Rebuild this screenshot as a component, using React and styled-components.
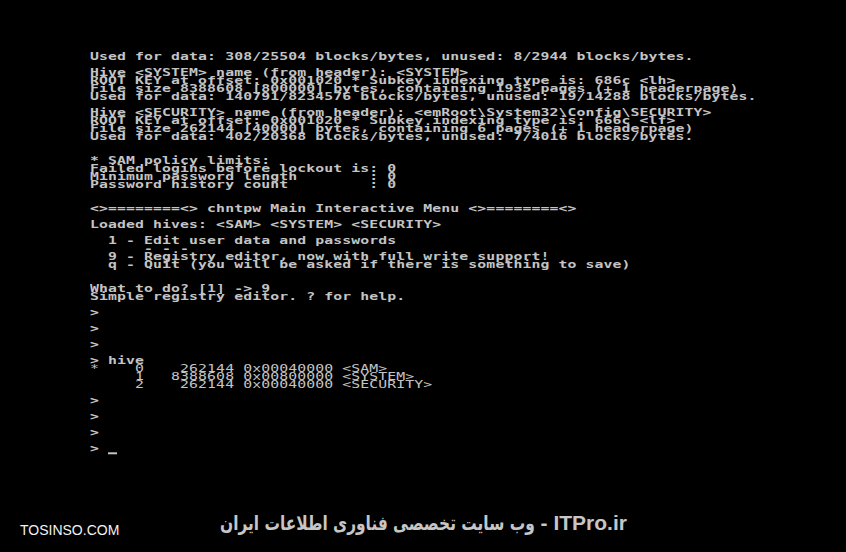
import React from 'react';
import styled, { createGlobalStyle } from 'styled-components';

const Global = createGlobalStyle`
  html, body { margin: 0; padding: 0; background: #000; }
  body { width: 846px; height: 552px; overflow: hidden; }
`;

const Screen = styled.div`
  width: 846px;
  height: 552px;
  background: #000;
  display: flex;
  flex-direction: column;
`;

const Terminal = styled.div`
  padding: 53px 0 0 90px;
  display: flex;
  flex-direction: column;
  font-family: "DejaVu Sans Mono", "Liberation Mono", monospace;
  font-size: 14.8px;
  letter-spacing: 0.1px;
  color: #c4c4c4;
`;

const Line = styled.div`
  height: 8px;
  line-height: 8px;
  white-space: pre;
  transform: scaleY(0.66);
  font-weight: ${p => (p.$thin ? 'normal' : 'bold')};
`;

const Cursor = styled.span`
  display: inline-block;
  width: 9px;
  height: 3px;
  background: #c4c4c4;
  vertical-align: -3px;
`;

const Footer = styled.div`
  display: grid;
  grid-template-columns: 1fr auto 1fr;
  align-items: start;
  padding-top: 58px;
`;

const Brand = styled.div`
  justify-self: start;
  margin: 11px 0 0 20px;
  font-family: "Liberation Sans", Arial, sans-serif;
  font-size: 14px;
  line-height: 16px;
  color: #f2f2f2;
`;

const Tagline = styled.div`
  direction: rtl;
  white-space: nowrap;
  font-family: "Liberation Sans", "DejaVu Sans", sans-serif;
  font-weight: bold;
  font-size: 21px;
  line-height: 24px;
  color: #c6c6c6;
`;

const Persian = styled.span`
  display: inline-block;
  font-family: "DejaVu Sans", sans-serif;
  font-size: 20px;
  transform: scaleX(0.77);
  transform-origin: right center;
  margin-left: -93px;
`;

const rows = [
  'Used for data: 308/25504 blocks/bytes, unused: 8/2944 blocks/bytes.',
  '',
  'Hive <SYSTEM> name (from header): <SYSTEM>',
  'ROOT KEY at offset: 0x001020 * Subkey indexing type is: 686c <lh>',
  'File size 8388608 [800000] bytes, containing 1935 pages (+ 1 headerpage)',
  'Used for data: 140791/8234576 blocks/bytes, unused: 19/14288 blocks/bytes.',
  '',
  'Hive <SECURITY> name (from header): <emRoot\\System32\\Config\\SECURITY>',
  'ROOT KEY at offset: 0x001020 * Subkey indexing type is: 666c <lf>',
  'File size 262144 [40000] bytes, containing 6 pages (+ 1 headerpage)',
  'Used for data: 402/20368 blocks/bytes, unused: 7/4016 blocks/bytes.',
  '',
  '',
  '* SAM policy limits:',
  'Failed logins before lockout is: 0',
  'Minimum password length        : 0',
  'Password history count         : 0',
  '',
  '',
  '<>========<> chntpw Main Interactive Menu <>========<>',
  '',
  'Loaded hives: <SAM> <SYSTEM> <SECURITY>',
  '',
  '  1 - Edit user data and passwords',
  '      - - -',
  '  9 - Registry editor, now with full write support!',
  '  q - Quit (you will be asked if there is something to save)',
  '',
  '',
  'What to do? [1] -> 9',
  'Simple registry editor. ? for help.',
  '',
  '>',
  '',
  '>',
  '',
  '>',
  '',
  '> hive',
  { text: '*    0    262144 0x00040000 <SAM>', thin: true },
  { text: '     1   8388608 0x00800000 <SYSTEM>', thin: true },
  { text: '     2    262144 0x00040000 <SECURITY>', thin: true },
  '',
  '>',
  '',
  '>',
  '',
  '>',
  '',
  { text: '> ', cursor: true },
];

export default function App() {
  return (
    <>
      <Global />
      <Screen>
        <Terminal>
          {rows.map((r, i) => {
            const row = typeof r === 'string' ? { text: r } : r;
            return (
              <Line key={i} $thin={row.thin}>
                {row.text}
                {row.cursor && <Cursor />}
              </Line>
            );
          })}
        </Terminal>
        <Footer>
          <Brand>TOSINSO.COM</Brand>
          <Tagline>
            ITPro.ir - <Persian>وب سایت تخصصی فناوری اطلاعات ایران</Persian>
          </Tagline>
          <div />
        </Footer>
      </Screen>
    </>
  );
}
